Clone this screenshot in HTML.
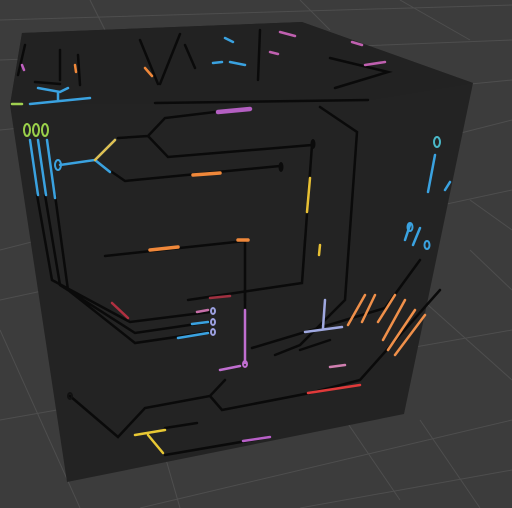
<!DOCTYPE html>
<html><head><style>html,body{margin:0;padding:0;background:#3b3b3b;width:512px;height:508px;overflow:hidden}</style></head>
<body>
<svg width="512" height="508" viewBox="0 0 512 508" xmlns="http://www.w3.org/2000/svg">
<rect width="512" height="508" fill="#3c3c3c"/>
<g stroke="#4e4e4e" stroke-width="1" fill="none">
<path d="M0 20 L512 5 M0 60 L512 40 M0 130 L512 80 M0 300 L512 190 M0 420 L512 330 M140 508 L512 420 M300 508 L512 470 M0 250 L512 120"/>
<path d="M90 0 L110 40 M300 0 L330 30 M400 0 L470 40 M470 200 L512 230 M470 250 L512 290 M0 330 L80 508 M180 508 L120 300 M400 500 L250 280 M480 508 L420 420 M400 280 L512 380"/>
</g>
<polygon points="22,33 302,22 473,83 404,414 67,482 10,105" fill="#232323"/>
<polygon points="22,33 302,22 473,83 370,100 10,105" fill="#222"/>
<g stroke="#0a0a0a" stroke-width="2.5" fill="none" stroke-linecap="round">
<path d="M155 103 L368 100"/>
<path d="M320 107 L357 132 L345 300 L300 345 L275 355"/>
<path d="M118 138 L148 136 L165 118 L215 112 M148 136 L168 157 L312 145"/>
<path d="M112 172 L125 181 L280 166"/>
<path d="M105 256 L245 241 M245 241 L245 310"/>
<path d="M37 195 L52 280 L130 322 L210 312 M45 195 L60 285 L135 333 L210 322 M55 195 L68 290 L135 343 L210 332"/>
<path d="M188 300 L302 283 L305 240 M302 283 L312 145"/>
<path d="M245 290 L245 300 M252 348 L385 308 L420 260 M300 350 L330 340"/>
<path d="M70 396 L118 437 L145 408 L210 396 L225 380 M210 396 L222 410 L310 393 L360 380 L440 290"/>
<path d="M165 428 L197 423 M165 455 L270 437"/>
<path d="M180 34 L160 84 M140 40 L158 84 M185 45 L195 68 M260 30 L258 80 M330 58 L388 72 L335 88"/>
<path d="M18 75 L25 45 M60 50 L60 80 M78 55 L80 85 M35 82 L60 84"/>
</g>
<g stroke-width="2.5" fill="none" stroke-linecap="round">
<path d="M218 112 L250 109" stroke="#b45fc2" stroke-width="4.5"/>
<path d="M193 175 L220 173" stroke="#f0883a" stroke-width="3.5"/>
<path d="M150 250 L178 247" stroke="#f0883a" stroke-width="3.5"/>
<path d="M238 240 L248 240" stroke="#f0883a" stroke-width="3.5"/>
<path d="M310 178 L307 212" stroke="#e8c034"/>
<path d="M320 245 L319 255" stroke="#e8c034"/>
<path d="M30 140 L38 195 M38 140 L46 195 M47 140 L55 198" stroke="#3aa2e0"/>
<path d="M60 165 L95 160 L115 140 M95 160 L110 172" stroke="#3aa2e0"/>
<path d="M95 160 L115 140" stroke="#e0c050"/>
<path d="M435 155 L428 192 M450 182 L445 190 M410 225 L405 240 M420 228 L413 245" stroke="#3aa2e0"/>
<path d="M112 303 L128 318" stroke="#b03040"/>
<path d="M210 298 L230 296" stroke="#a03040"/>
<path d="M197 312 L208 310" stroke="#c76fa8"/>
<path d="M192 324 L208 322 M178 338 L208 333" stroke="#3aa2e0"/>
<path d="M245 310 L245 363 M220 370 L240 366" stroke="#c06ed0"/>
<path d="M325 300 L323 328 M305 332 L342 327" stroke="#9fa8e0"/>
<path d="M348 325 L365 295 M362 322 L375 295 M378 322 L395 295 M383 340 L405 300 M388 350 L415 310 M395 355 L425 315" stroke="#f0904a"/>
<path d="M308 393 L360 385" stroke="#e03a3a"/>
<path d="M135 435 L165 430 M148 435 L163 453" stroke="#e8c834"/>
<path d="M243 441 L270 437" stroke="#b860c8"/>
<path d="M330 367 L345 365" stroke="#d07fb0"/>
<path d="M280 32 L295 36 M270 52 L278 54 M352 42 L362 45 M365 65 L385 62" stroke="#c060b0"/>
<path d="M225 38 L233 42 M230 62 L245 65 M213 63 L222 62" stroke="#3aa2e0"/>
<path d="M145 68 L152 76 M75 65 L76 72" stroke="#f0883a"/>
<path d="M38 88 L60 92 L68 88 M58 92 L58 100 M30 104 L90 98" stroke="#3aa2e0"/>
<path d="M12 104 L22 104" stroke="#a0d050"/>
<path d="M22 65 L24 70" stroke="#c060c0"/>
</g>
<g fill="none" stroke-width="2">
<ellipse cx="27" cy="130" rx="3" ry="6" stroke="#9ad04a"/><ellipse cx="36" cy="130" rx="3" ry="6" stroke="#9ad04a"/><ellipse cx="45" cy="130" rx="3" ry="6" stroke="#9ad04a"/>
<ellipse cx="58" cy="165" rx="3" ry="5" stroke="#3aa2e0"/>
<ellipse cx="437" cy="142" rx="3" ry="5" stroke="#4ab8c8"/>
<ellipse cx="410" cy="227" rx="2.5" ry="4" stroke="#3aa2e0"/><ellipse cx="427" cy="245" rx="2.5" ry="4" stroke="#3aa2e0"/>
<ellipse cx="213" cy="311" rx="2" ry="3" stroke="#9ca0e0"/><ellipse cx="213" cy="322" rx="2" ry="3" stroke="#9ca0e0"/><ellipse cx="213" cy="332" rx="2" ry="3" stroke="#9ca0e0"/>
<ellipse cx="245" cy="364" rx="2" ry="3" stroke="#c06ed0"/>
<ellipse cx="70" cy="396" rx="2" ry="3" stroke="#111"/>
</g>
<ellipse cx="313" cy="144" rx="2.5" ry="5" fill="#0b0b0b"/>
<ellipse cx="281" cy="167" rx="2.5" ry="5" fill="#0b0b0b"/>
</svg>
</body></html>
